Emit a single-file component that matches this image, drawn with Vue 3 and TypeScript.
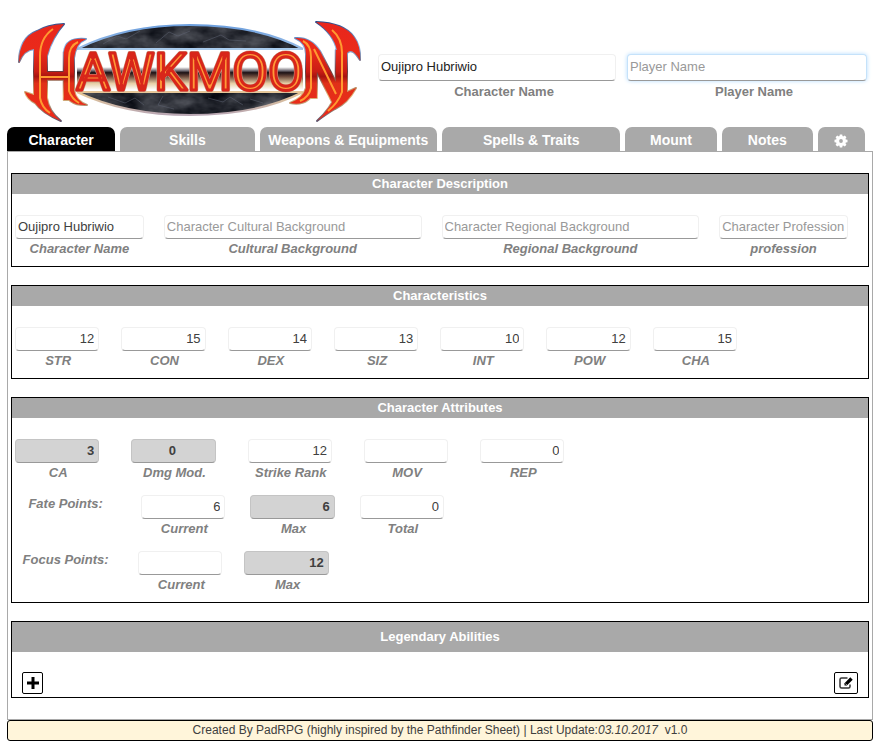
<script setup lang="ts">
import { ref } from 'vue'

interface Field {
  id: string
  label: string
  value: string
  placeholder?: string
  wide?: boolean
  locked?: boolean
  centered?: boolean
}

interface Tab {
  id: string
  label: string
}

const tabs: Tab[] = [
  { id: 'character', label: 'Character' },
  { id: 'skills', label: 'Skills' },
  { id: 'weapons', label: 'Weapons & Equipments' },
  { id: 'spells', label: 'Spells & Traits' },
  { id: 'mount', label: 'Mount' },
  { id: 'notes', label: 'Notes' },
]
const activeTab = ref('character')

const characterName = ref('Oujipro Hubriwio')
const playerName = ref('')

const description = ref<Field[]>([
  { id: 'cultural', label: 'Cultural Background', value: '', placeholder: 'Character Cultural Background', wide: true },
  { id: 'regional', label: 'Regional Background', value: '', placeholder: 'Character Regional Background', wide: true },
  { id: 'profession', label: 'profession', value: '', placeholder: 'Character Profession' },
])

const characteristics = ref<Field[]>([
  { id: 'str', label: 'STR', value: '12' },
  { id: 'con', label: 'CON', value: '15' },
  { id: 'dex', label: 'DEX', value: '14' },
  { id: 'siz', label: 'SIZ', value: '13' },
  { id: 'int', label: 'INT', value: '10' },
  { id: 'pow', label: 'POW', value: '12' },
  { id: 'cha', label: 'CHA', value: '15' },
])

const attributeRows = ref<{ id: string; title?: string; fields: Field[] }[]>([
  {
    id: 'combat',
    fields: [
      { id: 'ca', label: 'CA', value: '3', locked: true },
      { id: 'dmg', label: 'Dmg Mod.', value: '0', locked: true, centered: true },
      { id: 'strike', label: 'Strike Rank', value: '12' },
      { id: 'mov', label: 'MOV', value: '' },
      { id: 'rep', label: 'REP', value: '0' },
    ],
  },
  {
    id: 'fate',
    title: 'Fate Points:',
    fields: [
      { id: 'fate-current', label: 'Current', value: '6' },
      { id: 'fate-max', label: 'Max', value: '6', locked: true },
      { id: 'fate-total', label: 'Total', value: '0' },
    ],
  },
  {
    id: 'focus',
    title: 'Focus Points:',
    fields: [
      { id: 'focus-current', label: 'Current', value: '' },
      { id: 'focus-max', label: 'Max', value: '12', locked: true },
    ],
  },
])
</script>

<template>
  <div class="sheet">
    <header class="masthead">
      <svg class="logo" viewBox="7 12 360 112" role="img" aria-label="Hawkmoon">
        <defs>
          <linearGradient id="chrome" x1="0" y1="0" x2="0" y2="1">
            <stop offset="0" stop-color="#ffffff" />
            <stop offset="0.42" stop-color="#ffffff" />
            <stop offset="0.5" stop-color="#77727a" />
            <stop offset="0.55" stop-color="#1d1215" />
            <stop offset="0.64" stop-color="#6b4a3c" />
            <stop offset="0.8" stop-color="#e6cfa6" />
            <stop offset="0.95" stop-color="#ffffff" />
          </linearGradient>
          <linearGradient id="rim" x1="0" y1="0" x2="0" y2="1">
            <stop offset="0" stop-color="#6d9fdd" />
            <stop offset="0.45" stop-color="#b9d2ee" />
            <stop offset="0.75" stop-color="#e5c795" />
            <stop offset="1" stop-color="#b9a7b4" />
          </linearGradient>
          <linearGradient id="ember" gradientUnits="userSpaceOnUse" x1="0" y1="22" x2="0" y2="121">
            <stop offset="0" stop-color="#e8261c" />
            <stop offset="0.3" stop-color="#ea2a1a" />
            <stop offset="0.5" stop-color="#c91d14" />
            <stop offset="0.55" stop-color="#a81410" />
            <stop offset="0.62" stop-color="#e03018" />
            <stop offset="1" stop-color="#f0281a" />
          </linearGradient>
          <linearGradient id="edge" gradientUnits="userSpaceOnUse" x1="0" y1="22" x2="0" y2="121">
            <stop offset="0" stop-color="#2a4785" />
            <stop offset="0.25" stop-color="#8db7e8" />
            <stop offset="0.5" stop-color="#6a3c40" />
            <stop offset="0.75" stop-color="#e8bb7a" />
            <stop offset="1" stop-color="#55506a" />
          </linearGradient>
          <filter id="rock" x="0" y="0" width="1" height="1" color-interpolation-filters="sRGB">
            <feTurbulence type="fractalNoise" baseFrequency="0.035 0.06" numOctaves="4" seed="8" result="noise" />
            <feColorMatrix in="noise" type="matrix" values="0.45 0 0 0 -0.05  0.45 0 0 0 -0.04  0.45 0 0 0 -0.01  0 0 0 0 1" />
          </filter>
          <clipPath id="oval">
            <path d="M77 49 Q125 25 190 25 Q258 25 303 49 V92 Q258 115 190 115 Q125 115 77 92 Z" />
          </clipPath>
          <g id="blades">
            <path d="M64 24 Q53 36 47 56 V98 Q49 112 61 121 Q42 113 35 103 Q27 99 25 92 L34 95 V49 Q24 50 19 62 Q19 38 37 31 Q47 25 64 24Z" />
            <path d="M86 39 Q76 43 74 58 V90 Q76 101 87 105 Q68 106 64 91 V52 Q65 37 86 39Z" />
            <path d="M316 22 Q344 23 354 37 Q361 46 360 60 Q352 47 347 53 L347 92 L356 88 Q348 103 335 109 Q328 113 317 121 Q331 108 337 92 V51 Q334 34 316 22Z" />
            <path d="M295 38 Q311 37 320 51 L341 92 L335 108 L316 70 V89 Q308 107 290 103 Q303 98 306 88 V54 Q306 43 295 38Z" />
            <text class="capital" x="31" y="100">H</text>
            <text class="capital" x="303" y="98">N</text>
          </g>
        </defs>

        <g clip-path="url(#oval)">
          <rect x="70" y="20" width="240" height="100" filter="url(#rock)" />
          <g fill="none" stroke="#606576" stroke-width="1" opacity="0.5">
            <path d="M103 44l14-8 9 3 14-8M156 43l13-11 9 4 12-5M203 42l18-7 8 5 17 1M108 97l17 6 10-5 9 7M163 96l-5 9 16 4M208 98l15 4 7-5 13 8M250 99l13 4" />
          </g>
          <rect x="70" y="49" width="240" height="43" fill="url(#chrome)" />
          <path d="M70 49H310" stroke="#a9cbed" stroke-width="2" />
          <path d="M70 92H310" stroke="#e5c79a" stroke-width="2" />
        </g>
        <path d="M77 49 Q125 25 190 25 Q258 25 303 49 M303 92 Q258 115 190 115 Q125 115 77 92" fill="none" stroke="url(#rim)" stroke-width="2" />

        <use href="#blades" fill="url(#edge)" stroke="url(#edge)" stroke-width="2" stroke-linejoin="round" />
        <use href="#blades" fill="url(#ember)" />
        <path class="seam" d="M53 29 Q40 38 40 56 V98 Q42 108 50 113 M41 77 H68 M78 42 Q69 46 69 58 V91 Q72 99 79 103 M303 41 Q311 45 311 57 V88 Q309 97 300 101 M314 49 L336 94 M332 30 Q343 39 342 56 V92 Q338 103 328 111" />
        <text class="letters outline" x="76" y="90" aria-hidden="true">AWKMOO</text>
        <text class="letters body" x="76" y="90">AWKMOO</text>
      </svg>

      <div class="field identity">
        <input id="head-character" v-model="characterName" type="text" />
        <label for="head-character">Character Name</label>
      </div>
      <div class="field identity">
        <input id="head-player" v-model="playerName" class="glow" type="text" placeholder="Player Name" />
        <label for="head-player">Player Name</label>
      </div>
    </header>

    <nav class="tabs">
      <button
        v-for="tab in tabs"
        :key="tab.id"
        type="button"
        :class="{ active: activeTab === tab.id }"
        @click="activeTab = tab.id"
      >
        {{ tab.label }}
      </button>
      <button type="button" aria-label="Settings" :class="{ active: activeTab === 'settings' }" @click="activeTab = 'settings'">
        <svg class="gear" viewBox="0 0 14 14" aria-hidden="true">
          <g fill="currentColor">
            <path v-for="angle in [0, 45, 90, 135]" :key="angle" d="M5.800 .5h2.400l.6 3v7l-.6 3H5.800l-.6-3v-7z" :transform="`rotate(${angle} 7 7)`" />
          </g>
          <circle cx="7" cy="7" r="3.400" fill="none" stroke="currentColor" stroke-width="3" />
          <circle cx="7" cy="7" r="1.900" class="gear-hole" />
        </svg>
      </button>
    </nav>

    <main class="panel">
      <section class="block">
        <h2>Character Description</h2>
        <div class="row described">
          <div class="field">
            <input id="character-name" v-model="characterName" type="text" />
            <label for="character-name">Character Name</label>
          </div>
          <div v-for="field in description" :key="field.id" class="field" :class="{ wide: field.wide }">
            <input :id="field.id" v-model="field.value" type="text" :placeholder="field.placeholder" />
            <label :for="field.id">{{ field.label }}</label>
          </div>
        </div>
      </section>

      <section class="block">
        <h2>Characteristics</h2>
        <div class="row numeric">
          <div v-for="field in characteristics" :key="field.id" class="field">
            <input :id="field.id" v-model="field.value" type="text" inputmode="numeric" />
            <label :for="field.id">{{ field.label }}</label>
          </div>
        </div>
      </section>

      <section class="block">
        <h2>Character Attributes</h2>
        <div v-for="row in attributeRows" :key="row.id" class="row numeric" :class="row.id">
          <span v-if="row.title" class="row-title">{{ row.title }}</span>
          <div v-for="field in row.fields" :key="field.id" class="field">
            <input
              :id="field.id"
              v-model="field.value"
              type="text"
              inputmode="numeric"
              :readonly="field.locked"
              :class="{ centered: field.centered }"
            />
            <label :for="field.id">{{ field.label }}</label>
          </div>
        </div>
      </section>

      <section class="block abilities">
        <h2>Legendary Abilities</h2>
        <div class="controls">
          <button type="button" class="add" aria-label="Add ability">
            <svg viewBox="0 0 12 12" aria-hidden="true"><path d="M6 0v12M0 6h12" fill="none" stroke="currentColor" stroke-width="3" /></svg>
          </button>
          <button type="button" class="edit" aria-label="Modify abilities">
            <svg viewBox="0 0 14 14" aria-hidden="true">
              <path d="M8.5 2H2.6Q1 2 1 3.600V10.500Q1 12 2.600 12H9.500Q11 12 11 10.500V8.500" fill="none" stroke="#333" stroke-width="1.500" />
              <path d="M5.500 9.500V7.200L11.300 1.300L13.700 3.700L7.900 9.500Z" fill="currentColor" />
              <path d="M6.500 7.700L7.500 8.700" stroke="#fff" stroke-width="1" />
            </svg>
          </button>
        </div>
      </section>
    </main>

    <footer class="credits">
      Created By PadRPG (highly inspired by the Pathfinder Sheet) | Last Update:<em>03.10.2017</em>&nbsp; v1.0
    </footer>
  </div>
</template>

<style>
body {
  background: #fff;
}
</style>

<style scoped>
.sheet {
  padding: 12px 4px 4px 7px;
  font-family: "Liberation Sans", Arial, sans-serif;
  font-size: 13px;
  color: #404040;
}

.masthead {
  display: grid;
  grid-template-columns: 360fr 238fr 240fr;
  gap: 11px;
  align-items: start;
  padding: 0 6px 3px 0;
}

.logo {
  display: block;
  width: 100%;
}

.seam {
  fill: none;
  stroke: #ff9a30;
  stroke-width: 2;
}

.capital {
  font-family: Roboto, sans-serif;
  font-size: 66px;
  font-weight: 700;
}

.letters {
  font-family: Roboto, sans-serif;
  font-size: 52px;
  font-weight: 400;
  stroke-linejoin: round;
}

.outline {
  fill: none;
  stroke: #c9a08a;
  stroke-width: 4px;
}

.body {
  fill: #ff9a38;
  stroke: #d8261a;
  stroke-width: 3px;
}

.field {
  display: flex;
  flex-direction: column;
  min-width: 0;
}

.identity {
  margin-top: 42px;
}

input {
  box-sizing: border-box;
  width: 100%;
  height: 24px;
  padding: 0 2px 2px 2px;
  border: 1px solid #f0f0f0;
  border-bottom-color: #999;
  border-radius: 4px;
  background: #fff;
  color: #404040;
  font: inherit;
  outline: none;
}

input::placeholder {
  color: #999;
  opacity: 1;
}

.identity input {
  height: 27px;
  color: #222;
}

input.glow,
input:focus {
  border-color: #c5e2fa;
  border-bottom-color: #999;
  box-shadow: 0 0 4px #b5dcff;
}

label,
.row-title {
  color: #808080;
  font-weight: bold;
  font-style: italic;
  line-height: 18px;
  text-align: center;
}

label {
  padding-top: 1px;
}

.identity label {
  margin-left: 14px;
  font-style: normal;
  line-height: 20px;
}

.tabs {
  display: grid;
  grid-template-columns: 108fr 134fr 177fr 178fr 91fr 91fr 47fr;
  gap: 5px;
  padding-right: 8px;
}

.tabs button {
  min-width: 0;
  height: 24px;
  padding: 2px 0 0;
  border: 0;
  border-radius: 7px 7px 0 0;
  background: #a9a9a9;
  color: #fff;
  font: bold 14px "Liberation Sans", Arial, sans-serif;
  white-space: nowrap;
}

.tabs button.active {
  background: #000;
}

.gear {
  display: inline-block;
  width: 14px;
  height: 14px;
  vertical-align: middle;
}

.gear-hole {
  fill: #a9a9a9;
}

.panel {
  display: flex;
  flex-direction: column;
  gap: 18px;
  padding: 21px 3px;
  border: 1px solid #a9a9a9;
}

.block {
  padding-bottom: 8px;
  border: 1px solid #000;
}

h2 {
  margin: 0 0 21px;
  background: #a9a9a9;
  color: #fff;
  font-size: 13px;
  line-height: 20px;
  text-align: center;
}

.row {
  display: flex;
  align-items: flex-start;
  padding: 0 10px 0 3px;
}

.row + .row {
  margin-top: 13px;
}

.described {
  gap: 20px;
  padding-right: 20px;
}

.described .field {
  flex: 1 1 0;
}

.described .wide {
  flex-grow: 2;
}

.numeric {
  gap: 22px;
}

.numeric .field {
  flex: 0 0 10%;
}

.numeric label {
  padding-left: 2px;
}

.numeric input {
  padding-right: 4px;
  text-align: right;
}

.combat {
  gap: 32px;
}

.fate {
  gap: 25px;
}

.row-title {
  flex: 0 0 12%;
}

.numeric input[readonly] {
  border-color: #c4c4c4;
  border-bottom-color: #999;
  background: #d3d3d3;
  font-weight: bold;
}

.numeric input.centered {
  text-align: center;
}

.abilities {
  padding-bottom: 3px;
}

.abilities h2 {
  margin-bottom: 20px;
  line-height: 30px;
}

.controls {
  display: flex;
  justify-content: space-between;
  padding: 0 10px;
}

.controls button {
  display: flex;
  align-items: center;
  justify-content: center;
  box-sizing: border-box;
  height: 22px;
  padding: 0;
  border: 1px solid #000;
  border-radius: 2px;
  background: #fff;
  color: #000;
}

.controls .add {
  width: 21px;
}

.controls .edit {
  width: 24px;
}

.add svg {
  width: 12px;
  height: 12px;
}

.edit svg {
  width: 14px;
  height: 14px;
}

.credits {
  border: 1px solid #000;
  border-radius: 3px;
  background: #fff5da;
  font-size: 12px;
  line-height: 19px;
  text-align: center;
}
</style>
